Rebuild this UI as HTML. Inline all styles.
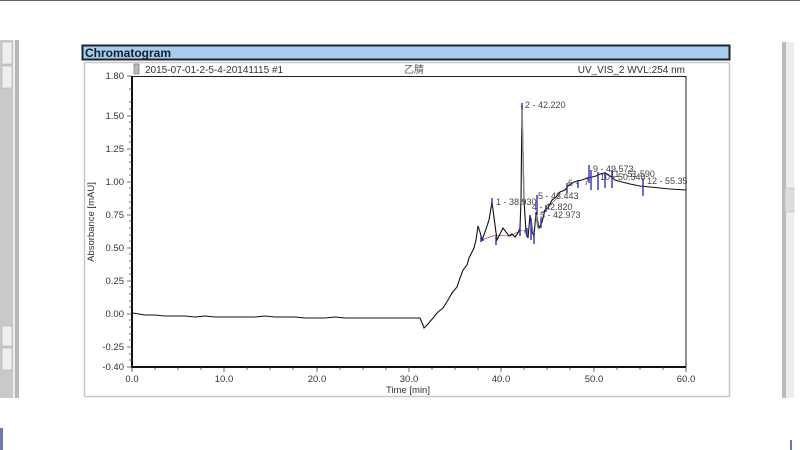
<!DOCTYPE html>
<html><head><meta charset="utf-8"><style>
html,body{margin:0;padding:0;width:800px;height:450px;overflow:hidden;background:#fff;}
svg{display:block;font-family:"Liberation Sans","Noto Sans CJK SC",sans-serif;}
</style></head><body>
<svg width="800" height="450" viewBox="0 0 800 450">
<rect x="0" y="0" width="800" height="1" fill="#666"/>
<!-- left sidebar -->
<rect x="0" y="40" width="13" height="358" fill="#c9c9c9"/>
<rect x="13" y="40" width="2" height="358" fill="#eee"/>
<rect x="15" y="40" width="4" height="358" fill="#b8b8b8"/>
<rect x="2" y="42" width="10" height="22" fill="#eee" stroke="#aaa" stroke-width="0.5"/>
<rect x="2" y="66" width="10" height="22" fill="#eee" stroke="#aaa" stroke-width="0.5"/>
<rect x="2" y="326" width="10" height="20" fill="#eee" stroke="#aaa" stroke-width="0.5"/>
<rect x="2" y="348" width="10" height="22" fill="#eee" stroke="#aaa" stroke-width="0.5"/>
<rect x="0" y="428" width="3" height="22" fill="#6a7aa8"/>
<!-- right scrollbar -->
<rect x="782" y="42" width="4" height="356" fill="#bbb"/>
<rect x="786" y="42" width="8" height="356" fill="#ededed"/>
<rect x="785" y="188" width="9" height="24" fill="#ddd" stroke="#bbb" stroke-width="0.5"/>
<rect x="790" y="440" width="2" height="10" fill="#6a7aa8"/>
<!-- panel -->
<rect x="82.5" y="45.5" width="647" height="14" fill="#a9cbee" stroke="#1b2530" stroke-width="2"/>
<text x="85" y="57" font-size="12" font-weight="bold" fill="#102030">Chromatogram</text>
<rect x="84.5" y="62.5" width="645" height="334" fill="#fff" stroke="#c8c8c8" stroke-width="1.5"/>
<!-- header -->
<rect x="134" y="64" width="5" height="10" fill="#bbb" stroke="#666" stroke-width="0.6"/>
<text x="145" y="73" font-size="10" fill="#333">2015-07-01-2-5-4-20141115 #1</text>
<text x="404" y="73" font-size="10" fill="#555">乙腈</text>
<text x="685" y="73" font-size="10" fill="#333" text-anchor="end">UV_VIS_2 WVL:254 nm</text>
<!-- plot box -->
<rect x="132" y="76.5" width="554" height="290.5" fill="none" stroke="#222" stroke-width="1"/>
<line x1="132" y1="76" x2="132" y2="368" stroke="#111" stroke-width="2"/>
<line x1="131" y1="367" x2="686" y2="367" stroke="#111" stroke-width="2"/>
<g stroke="#444" stroke-width="0.8">
<path d="M127 76H132M127 116H132M127 149H132M127 182H132M127 215H132M127 248H132M127 281H132M127 314H132M127 347H132M127 367H132"/>
<path d="M129 89H132M129 102H132M129 109H132M129 122H132M129 129H132M129 136H132M129 142H132M129 155H132M129 162H132M129 169H132M129 175H132M129 188H132M129 195H132M129 202H132M129 208H132M129 221H132M129 228H132M129 235H132M129 241H132M129 254H132M129 261H132M129 268H132M129 274H132M129 287H132M129 294H132M129 301H132M129 307H132M129 320H132M129 327H132M129 334H132M129 340H132M129 354H132M129 360H132"/>
<path d="M132 367V372M224 367V372M317 367V372M409 367V372M501 367V372M594 367V372M686 367V372"/>
<path d="M155 367V370M178 367V370M201 367V370M247 367V370M270 367V370M293 367V370M340 367V370M363 367V370M386 367V370M432 367V370M455 367V370M478 367V370M524 367V370M547 367V370M570 367V370M617 367V370M640 367V370M663 367V370"/>
</g>
<g font-size="9.5" fill="#333" text-anchor="end">
<text x="124" y="79">1.80</text><text x="124" y="119">1.50</text><text x="124" y="152">1.25</text><text x="124" y="185">1.00</text><text x="124" y="218">0.75</text><text x="124" y="251">0.50</text><text x="124" y="284">0.25</text><text x="124" y="317">0.00</text><text x="124" y="350">-0.25</text><text x="124" y="370">-0.40</text>
</g>
<g font-size="9.5" fill="#333" text-anchor="middle">
<text x="132" y="382">0.0</text><text x="224" y="382">10.0</text><text x="317" y="382">20.0</text><text x="409" y="382">30.0</text><text x="501" y="382">40.0</text><text x="594" y="382">50.0</text><text x="686" y="382">60.0</text>
</g>
<text x="408" y="393" font-size="9.5" fill="#333" text-anchor="middle">Time [min]</text>
<text transform="translate(94,222) rotate(-90)" font-size="9.5" fill="#333" text-anchor="middle">Absorbance [mAU]</text>
<!-- baseline segments -->
<path d="M481 240L496 235L510 236L522 230M540 215L560 195" stroke="#c04050" stroke-width="0.7" fill="none"/>
<!-- trace -->
<path d="M133 313L145 315L155 315L165 316L175 316L185 316L195 317L205 316L215 317L225 317L235 317L245 317L255 317L265 316L275 317L285 317L295 317L305 318L315 318L325 318L335 317L345 318L355 318L365 318L375 318L385 318L395 318L405 318L415 318L420 318L423 325L424 328L428 324L433 318L438 312L443 308L448 300L452 293L457 287L460 278L463 270L467 265L469 258L472 252L474 248L476 240L478 226L480 232L482 240L485 232L489 220L492 202L495 225L497 240L500 234L503 228L506 232L509 236L512 234L515 237L518 233L520 228L521 200L522 105L524 200L526 232L528 238L530 215L532 232L534 236L536 212L539 228L542 222L545 210L548 208L552 200L556 197L560 192L565 190L568 186L572 183L577 181L582 180L587 178L592 177L596 176L600 174L605 173L610 176L615 180L622 182L630 184L640 186L650 187L660 188L670 189L686 190" fill="none" stroke="#111" stroke-width="1.1"/>
<path d="M522 110L524 200M524 230L527 236M531 220L533 232M536 215L538 228" stroke="#888" stroke-width="1.5" fill="none"/>
<!-- peak markers -->
<g stroke="#3030b0" stroke-width="1.4">
<path d="M481 235V242M492 198V206M496 236V245M522 103V109M520 225V236M527 228V237M531 218V240M534 232V244M537 195V215M541 218V228M546 205V212M567 183V193M578 180V188M589 165V183M591 170V190M598 172V190M605 172V188M612 170V188M643 178V196M481 240H484"/>
</g>
<g font-size="9" fill="#444">
<text x="496" y="205">1 - 38.930</text>
<text x="525" y="108">2 - 42.220</text>
<text x="538" y="199">5 - 43.443</text>
<text x="532" y="210">4 - 42.820</text>
<text x="540" y="218">3 - 42.973</text>
<text x="568" y="186">6 -</text>
<text x="584" y="185">7</text>
<text x="593" y="172">9 - 49.573</text>
<text x="600" y="180">10 - 50.540</text>
<text x="610" y="177">11 - 51.590</text>
<text x="647" y="184">12 - 55.35</text>
</g>
</svg>
</body></html>
